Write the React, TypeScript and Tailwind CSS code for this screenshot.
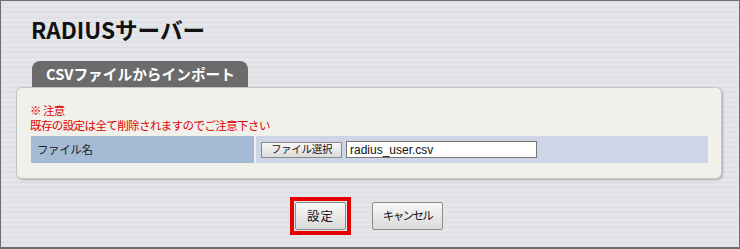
export default function App() {
  const jp = "font-['Noto_Sans_CJK_JP','Noto_Sans',sans-serif]";
  return (
    <div
      className={`w-[740px] h-[249px] box-border border border-b-2 border-[#6e6e6e] bg-[repeating-linear-gradient(180deg,#e4e6ea_0px,#dadde2_2px,#e8eaed_3px,#e0e2e6_5px)] ${jp} overflow-hidden`}
    >
      <div className="pl-[30px] pt-[16px] h-[60px] box-border">
        <h1 className="text-[22.6px] leading-[26px] font-bold text-[#111]">RADIUSサーバー</h1>
      </div>
      <div className="ml-[31px] w-[216px] h-[26px] rounded-t-[8px] bg-[#6b6b6b] pl-[14px] flex items-center">
        <span className="text-white font-bold text-[14.7px] leading-none">CSVファイルからインポート</span>
      </div>
      <div className="ml-[15px] w-[706px] h-[92px] box-border bg-[#f1f1ec] border border-[#c4c4c4] rounded-[6px] shadow-[1px_1px_2px_rgba(0,0,0,0.25)] pl-[13px] pt-[15px]">
        <div className="text-[11.5px] leading-[15px] tracking-[-0.6px] text-[#e00000]">※ 注意</div>
        <div className="text-[11.5px] leading-[15px] tracking-[-0.6px] text-[#e00000]">既存の設定は全て削除されますのでご注意下さい</div>
        <div className="mt-[3px] ml-[1px] w-[677px] h-[27px] flex gap-[2px]">
          <div className="w-[223px] bg-[#a4bad5] pl-[6px] flex items-center text-[11.5px] tracking-[-0.4px] text-[#222]">ファイル名</div>
          <div className="flex-1 bg-[#cdd5e6] pl-[5px] flex items-center gap-[4px]">
            <button className="w-[81px] h-[16px] box-border border border-[#8a8a8a] bg-[linear-gradient(180deg,#f7f7f7,#dcdcdc)] text-[10.5px] tracking-[-0.3px] leading-none text-[#111] flex items-center justify-center">ファイル選択</button>
            <div className="w-[191px] h-[17px] box-border border border-[#777] bg-white pl-[3px] flex items-center text-[12px] leading-none text-[#111] font-['Liberation_Sans',Arial,sans-serif]">radius_user.csv</div>
          </div>
        </div>
      </div>
      <div className="mt-[18px] ml-[289px] flex items-start gap-[21px]">
        <div className="border-[4px] border-[#e60000] p-[1px]">
          <button className="w-[51px] h-[28px] box-border border border-[#8c8c8c] rounded-[2px] bg-[linear-gradient(180deg,#f8f8f8,#dadada)] text-[12.5px] tracking-[1px] text-[#111] flex items-center justify-center">設定</button>
        </div>
        <button className="mt-[5px] w-[71px] h-[28px] box-border border border-[#8c8c8c] rounded-[2px] bg-[linear-gradient(180deg,#f8f8f8,#dadada)] text-[11.5px] tracking-[-1.6px] text-[#111] flex items-center justify-center">キャンセル</button>
      </div>
    </div>
  );
}
